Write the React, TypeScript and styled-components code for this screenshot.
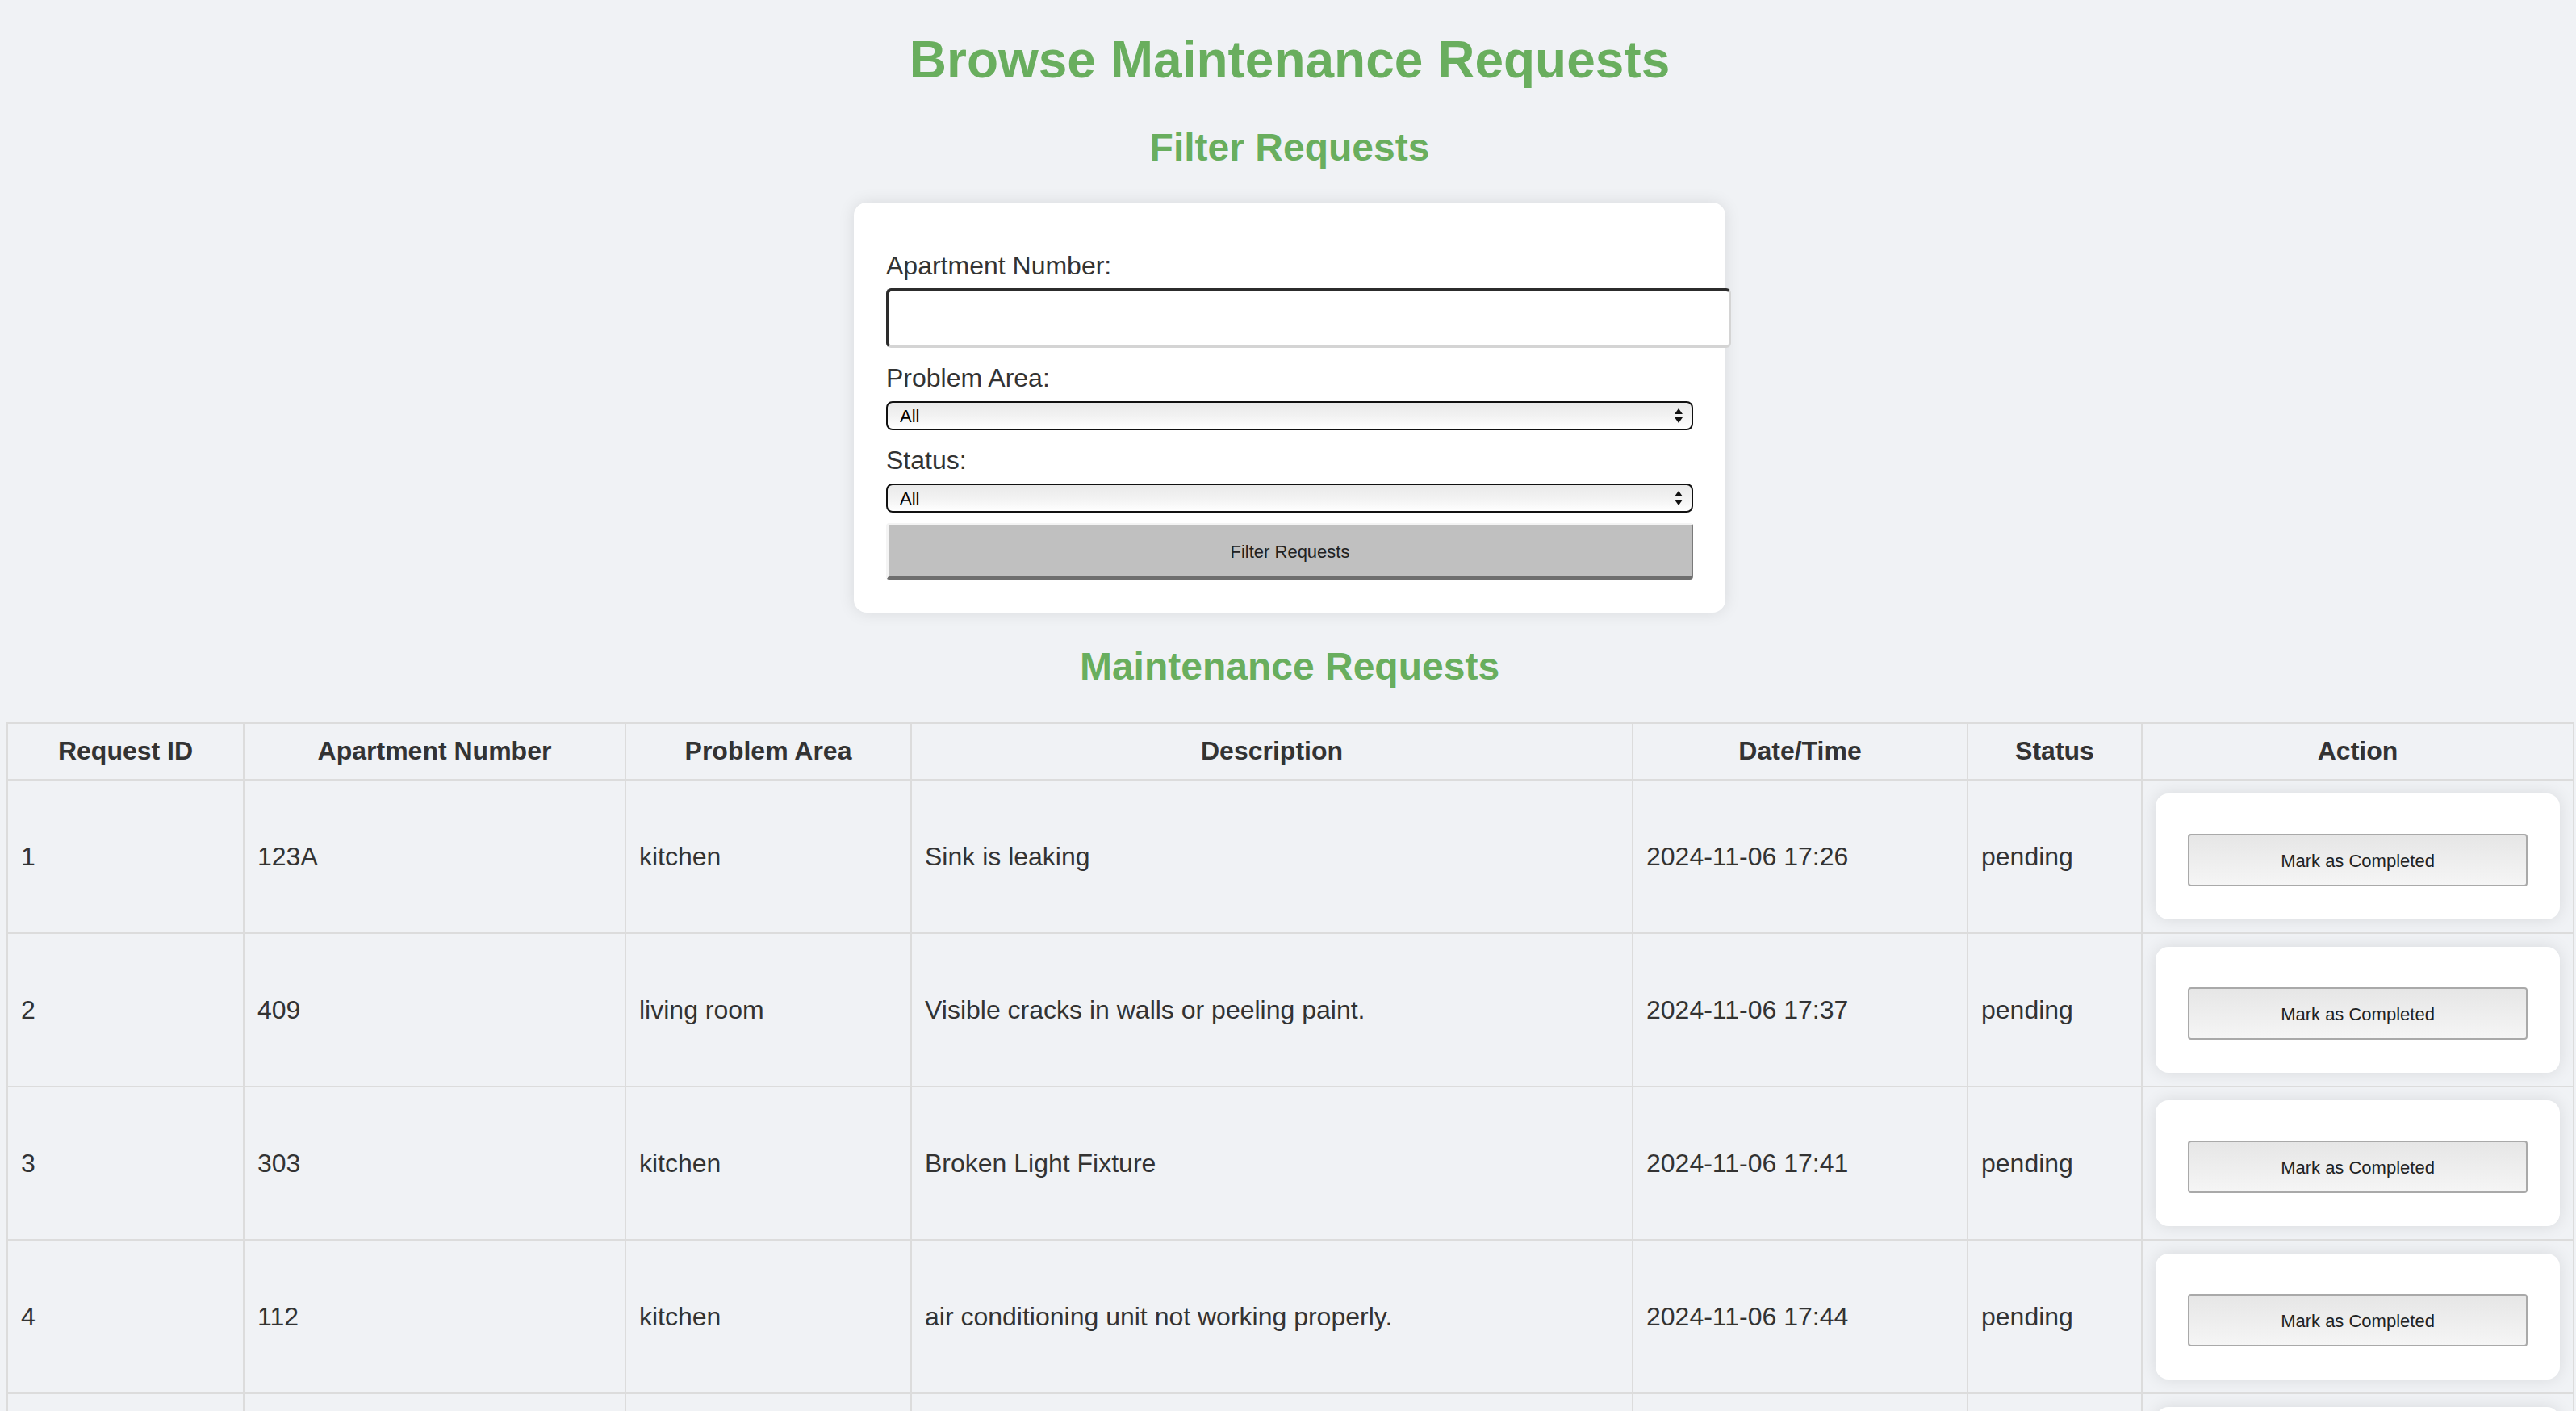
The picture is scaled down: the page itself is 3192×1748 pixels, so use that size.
import React from "react";
import styled, { createGlobalStyle } from "styled-components";

const GlobalStyle = createGlobalStyle`
  html, body {
    margin: 0;
    padding: 0;
    background: #f0f2f5;
  }
  body {
    font-family: "Liberation Sans", Arial, Helvetica, sans-serif;
    color: #333;
  }
  * { box-sizing: border-box; }
`;

const Page = styled.div`
  display: flex;
  flex-direction: column;
  padding: 37px 4px 0 8px;
`;

const Title = styled.h1`
  margin: 0;
  font-size: 64px;
  line-height: 74px;
  font-weight: bold;
  text-align: center;
  color: #69ae5e;
`;

const SubTitle = styled.h2<{ $top: number }>`
  margin: ${(p) => p.$top}px 0 0;
  font-size: 48px;
  line-height: 55px;
  font-weight: bold;
  text-align: center;
  color: #69ae5e;
`;

const FilterCard = styled.form`
  display: flex;
  flex-direction: column;
  width: 1080px;
  margin: 41px auto 0;
  padding: 40px 40px 41px;
  background: #fff;
  border-radius: 16px;
  box-shadow: 0 0 20px rgba(0, 0, 0, 0.1);
`;

const Label = styled.label<{ $top: number; $bottom: number }>`
  display: block;
  font-size: 32px;
  line-height: 37px;
  color: #333;
  margin: ${(p) => p.$top}px 0 ${(p) => p.$bottom}px;
`;

const TextInput = styled.input`
  display: block;
  width: calc(100% + 47px);
  height: 74px;
  padding: 0 20px;
  background: #fff;
  border-style: solid;
  border-color: #2c2c2c #d4d4d4 #d4d4d4 #2c2c2c;
  border-width: 4px 3px 3px 4px;
  border-radius: 6px;
  font-size: 32px;
  font-family: inherit;
  outline: none;
`;

const SelectWrap = styled.div`
  position: relative;
  width: 100%;
  height: 36px;
`;

const Select = styled.select`
  appearance: none;
  -webkit-appearance: none;
  display: block;
  width: 100%;
  height: 36px;
  padding: 0 40px 0 15px;
  border: 2px solid #111;
  border-radius: 8px;
  background: linear-gradient(#e9e9e9 0%, #f3f3f3 55%, #ffffff 100%);
  font-family: "Liberation Sans", Arial, Helvetica, sans-serif;
  font-size: 22px;
  color: #000;
  outline: none;
`;

const SelectArrows = styled.svg`
  position: absolute;
  right: 13px;
  top: 9px;
  width: 10px;
  height: 18px;
  pointer-events: none;
`;

const FilterButton = styled.button`
  display: block;
  width: 100%;
  height: 70px;
  margin-top: 13px;
  padding: 3px 0 0;
  background: #c0c0c0;
  border-style: solid;
  border-width: 2px 2px 4px 3px;
  border-color: #f4f4f4 #7a7a7a #6e6e6e #f4f4f4;
  border-radius: 4px;
  font-family: "Liberation Sans", Arial, Helvetica, sans-serif;
  font-size: 22px;
  color: #222;
`;

const Table = styled.table`
  width: 3180px;
  margin-top: 42px;
  border-collapse: collapse;
  table-layout: fixed;
`;

const HeadCell = styled.th`
  padding: 15px 16px 17px;
  border: 2px solid #dcdcdc;
  font-size: 32px;
  line-height: 36px;
  font-weight: bold;
  text-align: center;
  color: #333;
`;

const Cell = styled.td`
  padding: 16px;
  border: 2px solid #dcdcdc;
  font-size: 32px;
  line-height: 36px;
  text-align: left;
  vertical-align: middle;
  color: #333;
`;

const ActionBox = styled.form`
  display: flex;
  flex-direction: column;
  padding: 40px 40px 41px;
  background: #fff;
  border-radius: 16px;
  box-shadow: 0 0 20px rgba(0, 0, 0, 0.1);
`;

const MarkButton = styled.button`
  display: block;
  width: 100%;
  height: 65px;
  margin-top: 10px;
  padding: 2px 0 0;
  background: linear-gradient(#e6e6e6, #f5f5f5);
  border: 2px solid #a9a9a9;
  border-radius: 4px;
  font-family: "Liberation Sans", Arial, Helvetica, sans-serif;
  font-size: 22px;
  color: #222;
`;

type Req = {
  id: number;
  apt: string;
  area: string;
  desc: string;
  date: string;
  status: string;
};

const requests: Req[] = [
  { id: 1, apt: "123A", area: "kitchen", desc: "Sink is leaking", date: "2024-11-06 17:26", status: "pending" },
  { id: 2, apt: "409", area: "living room", desc: "Visible cracks in walls or peeling paint.", date: "2024-11-06 17:37", status: "pending" },
  { id: 3, apt: "303", area: "kitchen", desc: "Broken Light Fixture", date: "2024-11-06 17:41", status: "pending" },
  { id: 4, apt: "112", area: "kitchen", desc: "air conditioning unit not working properly.", date: "2024-11-06 17:44", status: "pending" },
  { id: 5, apt: "210", area: "bathroom", desc: "Toilet is clogged", date: "2024-11-06 17:52", status: "pending" },
];

const columns = [
  { name: "Request ID", width: 293 },
  { name: "Apartment Number", width: 473 },
  { name: "Problem Area", width: 354 },
  { name: "Description", width: 894 },
  { name: "Date/Time", width: 415 },
  { name: "Status", width: 216 },
  { name: "Action", width: 535 },
];

const Arrows = () => (
  <SelectArrows viewBox="0 0 10 18">
    <polygon points="5,0 10,7 0,7" fill="#111" />
    <polygon points="0,11 10,11 5,18" fill="#111" />
  </SelectArrows>
);

export default function App() {
  return (
    <>
      <GlobalStyle />
      <Page>
        <Title>Browse Maintenance Requests</Title>
        <SubTitle $top={44}>Filter Requests</SubTitle>
        <FilterCard onSubmit={(e) => e.preventDefault()}>
          <Label $top={20} $bottom={9} htmlFor="apt">
            Apartment Number:
          </Label>
          <TextInput id="apt" type="text" />
          <Label $top={19} $bottom={10} htmlFor="area">
            Problem Area:
          </Label>
          <SelectWrap>
            <Select id="area" defaultValue="All">
              <option>All</option>
              <option>kitchen</option>
              <option>living room</option>
              <option>bathroom</option>
              <option>bedroom</option>
            </Select>
            <Arrows />
          </SelectWrap>
          <Label $top={19} $bottom={10} htmlFor="status">
            Status:
          </Label>
          <SelectWrap>
            <Select id="status" defaultValue="All">
              <option>All</option>
              <option>pending</option>
              <option>completed</option>
            </Select>
            <Arrows />
          </SelectWrap>
          <FilterButton type="submit">Filter Requests</FilterButton>
        </FilterCard>
        <SubTitle $top={39}>Maintenance Requests</SubTitle>
        <Table>
          <colgroup>
            {columns.map((c) => (
              <col key={c.name} style={{ width: c.width }} />
            ))}
          </colgroup>
          <thead>
            <tr>
              {columns.map((c) => (
                <HeadCell key={c.name}>{c.name}</HeadCell>
              ))}
            </tr>
          </thead>
          <tbody>
            {requests.map((r) => (
              <tr key={r.id}>
                <Cell>{r.id}</Cell>
                <Cell>{r.apt}</Cell>
                <Cell>{r.area}</Cell>
                <Cell>{r.desc}</Cell>
                <Cell>{r.date}</Cell>
                <Cell>{r.status}</Cell>
                <Cell>
                  <ActionBox onSubmit={(e) => e.preventDefault()}>
                    <MarkButton type="submit">Mark as Completed</MarkButton>
                  </ActionBox>
                </Cell>
              </tr>
            ))}
          </tbody>
        </Table>
      </Page>
    </>
  );
}
